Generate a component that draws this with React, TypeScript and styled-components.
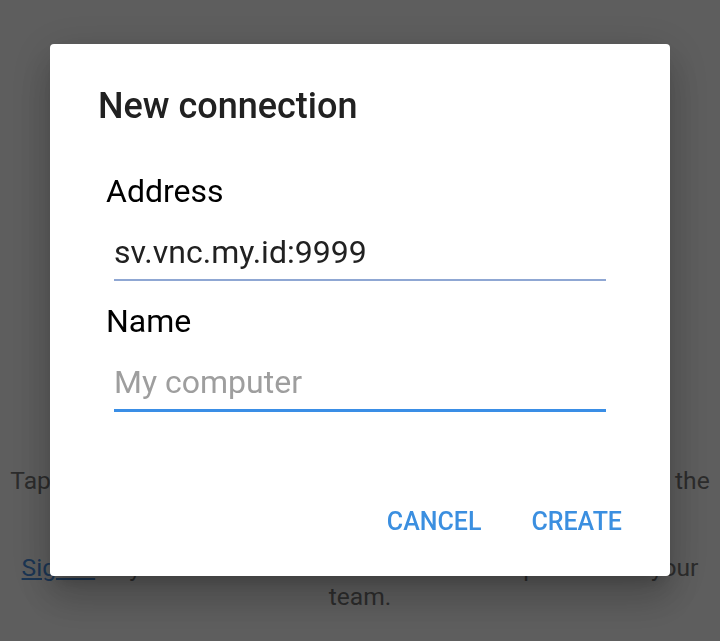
import React from "react";
import styled, { createGlobalStyle } from "styled-components";

const GlobalStyle = createGlobalStyle`
  html, body {
    margin: 0;
    padding: 0;
    background: #ffffff;
    font-family: Roboto, "Noto Sans", Arial, sans-serif;
  }
`;

export default function App() {
  return (
    <>
      <GlobalStyle />
      <Page>
        <Hint>
          Tap the + button to add a new computer, or choose one from the
          <br />
          list of computers.
        </Hint>
        <Hint>
          <a href="#">Sign in</a> to your RealVNC account to share computers
          with your
          <br />
          team.
        </Hint>
      </Page>
      <Overlay>
        <Dialog>
          <Title>New connection</Title>
          <Field>
            <Label>Address</Label>
            <Input defaultValue="sv.vnc.my.id:9999" />
          </Field>
          <Field>
            <Label>Name</Label>
            <Input placeholder="My computer" $focused />
          </Field>
          <Actions>
            <ActionButton>CANCEL</ActionButton>
            <ActionButton>CREATE</ActionButton>
          </Actions>
        </Dialog>
      </Overlay>
    </>
  );
}

const Page = styled.div`
  min-height: 641px;
  box-sizing: border-box;
  padding-top: 466px;
  display: flex;
  flex-direction: column;
  gap: 29px;
`;

const Hint = styled.p`
  margin: 0;
  text-align: center;
  white-space: nowrap;
  font-size: 24.6px;
  line-height: 29px;
  color: #777777;

  a {
    color: #4a90e2;
  }
`;

const Overlay = styled.div`
  position: fixed;
  inset: 0;
  background: rgba(0, 0, 0, 0.63);
  display: flex;
  justify-content: center;
  align-items: flex-start;
  padding-top: 44px;
`;

const Dialog = styled.div`
  width: 620px;
  height: 532px;
  box-sizing: border-box;
  background: #ffffff;
  border-radius: 4px;
  padding: 41px 32px 32px 48px;
  display: flex;
  flex-direction: column;
  box-shadow: 0 24px 38px 3px rgba(0, 0, 0, 0.14),
    0 9px 46px 8px rgba(0, 0, 0, 0.12), 0 11px 15px -7px rgba(0, 0, 0, 0.2);
`;

const Title = styled.h2`
  margin: 0 0 46px;
  font-size: 36px;
  line-height: 42px;
  font-weight: 500;
  color: #212121;
`;

const Field = styled.div`
  display: flex;
  flex-direction: column;
  padding: 0 32px 0 8px;
  margin-bottom: 22px;
`;

const Label = styled.label`
  font-size: 32px;
  line-height: 36px;
  color: #000000;
  margin-bottom: 25px;
`;

const Input = styled.input<{ $focused?: boolean }>`
  margin: 0 0 0 8px;
  padding: 0 0 9px;
  border: none;
  border-bottom: ${(p) => (p.$focused ? "3px solid #3a8ee6" : "2px solid #8fa7d3")};
  outline: none;
  font-family: Roboto, "Noto Sans", Arial, sans-serif;
  font-size: 32px;
  line-height: 36px;
  color: #212121;
  background: transparent;

  &::placeholder {
    color: #9e9e9e;
  }
`;

const Actions = styled.div`
  margin-top: auto;
  display: flex;
  justify-content: flex-end;
  gap: 18px;
`;

const ActionButton = styled.button`
  border: none;
  background: transparent;
  padding: 8px 16px;
  font-family: Roboto, "Noto Sans", Arial, sans-serif;
  font-size: 25px;
  line-height: 28px;
  font-weight: 500;
  color: #3b8fe0;
  cursor: pointer;
`;
